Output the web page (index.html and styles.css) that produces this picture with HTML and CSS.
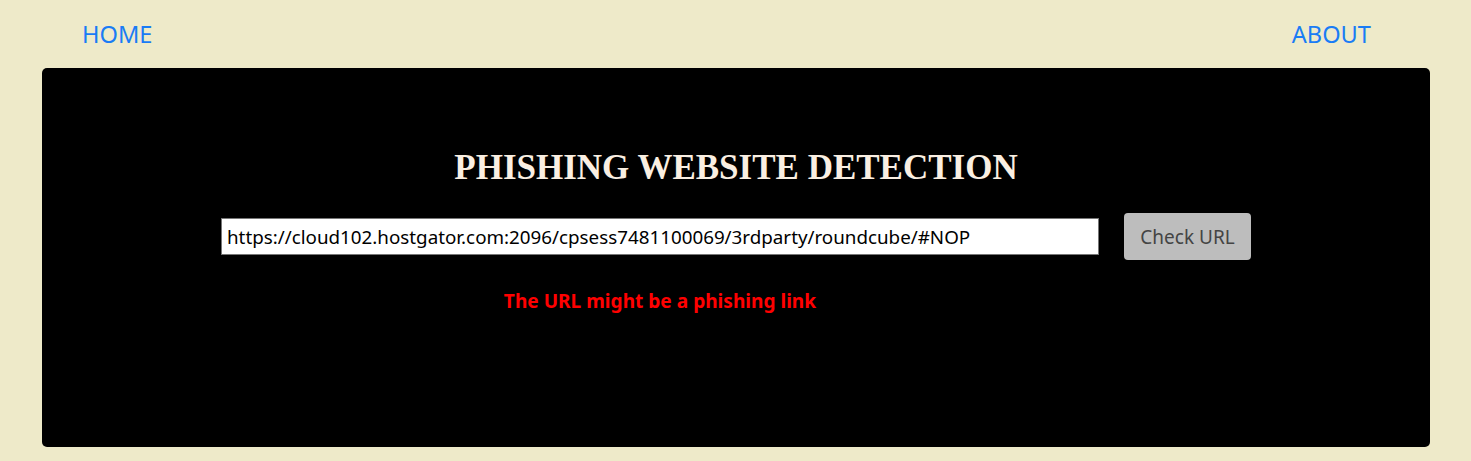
FILE: index.html
```html
<!DOCTYPE html>
<html>
<head>
<meta charset="utf-8">
<link rel="stylesheet" href="styles.css">
</head>
<body>
<nav class="nav">
  <a class="nav-link" href="#">HOME</a>
  <a class="nav-link" href="#">ABOUT</a>
</nav>
<main class="card">
  <h1 class="title">PHISHING WEBSITE DETECTION</h1>
  <div class="form">
    <div class="col">
      <input class="url" type="text" value="https://cloud102.hostgator.com:2096/cpsess7481100069/3rdparty/roundcube/#NOP">
      <p class="result">The URL might be a phishing link</p>
    </div>
    <button class="btn">Check URL</button>
  </div>
</main>
</body>
</html>
```
FILE: styles.css
```css
html, body {
  margin: 0;
  padding: 0;
}
body {
  background: #eeeac9;
  font-family: "Noto Sans", "Open Sans", sans-serif;
  width: 1471px;
  height: 461px;
  overflow: hidden;
}
.nav {
  display: flex;
  justify-content: space-between;
  padding: 18px 100px 0 82px;
  height: 50px;
  box-sizing: border-box;
}
.nav-link {
  color: #1a7cf5;
  text-decoration: none;
  font-size: 23.6px;
  line-height: 32px;
}
.card {
  margin: 0 41px 0 42px;
  background: #000;
  border-radius: 5px;
  height: 379px;
  box-sizing: border-box;
  padding-top: 82px;
  margin-top: 18px;
}
.title {
  margin: 0;
  text-align: center;
  font-family: "Liberation Serif", "Times New Roman", serif;
  font-weight: bold;
  font-size: 35px;
  line-height: 36px;
  color: #faefe2;
}
.form {
  display: flex;
  justify-content: center;
  align-items: flex-start;
  gap: 25px;
  margin-top: 27px;
}
.col {
  display: flex;
  flex-direction: column;
  align-items: center;
  padding-top: 5px;
}
.url {
  width: 878px;
  height: 37px;
  box-sizing: border-box;
  border: 1px solid #767676;
  background: #fff;
  padding: 0 5px;
  font-family: "Noto Sans", "Open Sans", sans-serif;
  font-size: 18.8px;
  color: #000;
  outline: none;
}
.result {
  margin: 34px 0 0;
  color: #ff0000;
  font-weight: bold;
  font-size: 19.1px;
  line-height: 24px;
}
.btn {
  width: 127px;
  height: 47px;
  border: none;
  border-radius: 4px;
  background: #bdbdbd;
  color: #444;
  font-family: "Noto Sans", "Open Sans", sans-serif;
  font-size: 19px;
  padding: 0;
}
```
